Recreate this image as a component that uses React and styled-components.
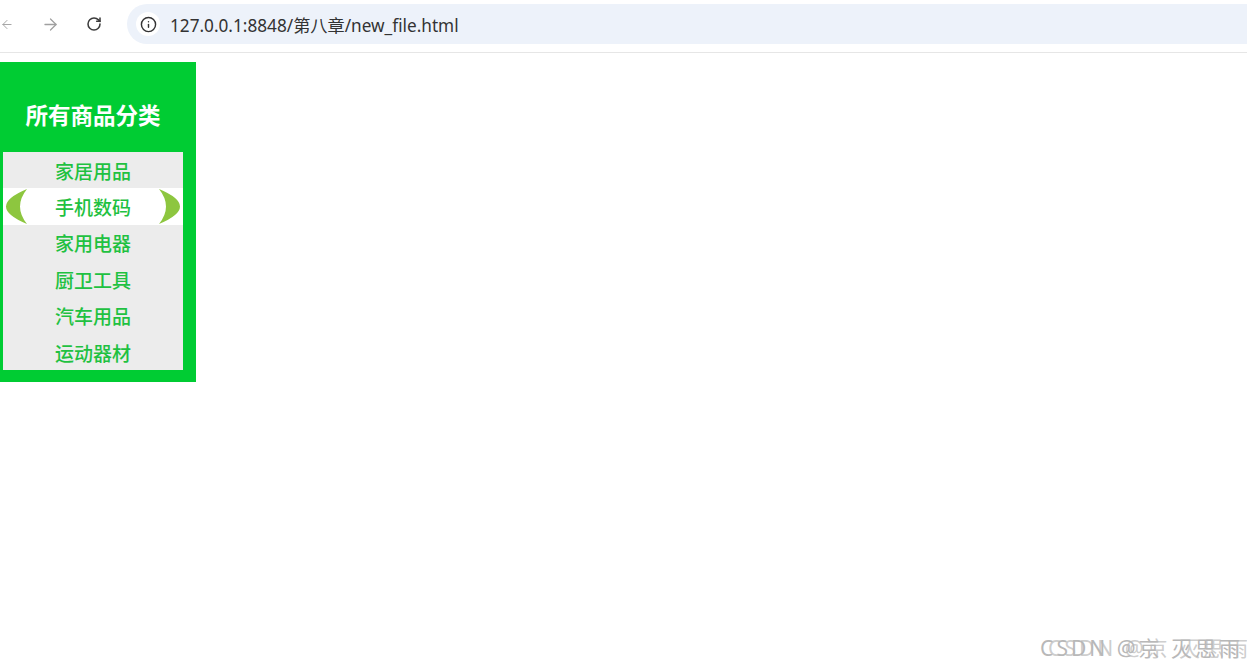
import React from 'react'
import styled, { createGlobalStyle } from 'styled-components'
import { ArrowLeft, ArrowRight, RotateCw, Info } from 'lucide-react'

const Global = createGlobalStyle`
  html, body { margin:0; padding:0; background:#fff; }
  body { font-family: "Noto Sans", "Noto Sans CJK SC", sans-serif; }
  * { box-sizing:border-box; }
`

const Page = styled.div`
  width:1247px;
  height:669px;
  display:flex;
  flex-direction:column;
  overflow:hidden;
`

const Toolbar = styled.div`
  height:53px;
  display:flex;
  align-items:flex-start;
  padding-top:4px;
  border-bottom:1px solid #e6e6e6;
`

const NavButton = styled.div`
  width:${p => p.w}px;
  height:40px;
  display:flex;
  align-items:center;
  justify-content:center;
  color:${p => p.dim ? '#a0a0a0' : '#3c3c3c'};
`

const AddressBar = styled.div`
  flex:1;
  height:40px;
  margin-left:${p => p.ml}px;
  background:#edf2fa;
  border-radius:20px 0 0 20px;
  display:flex;
  align-items:center;
  padding-left:9px;
  gap:10px;
`

const InfoDot = styled.div`
  width:24px;
  height:24px;
  border-radius:50%;
  background:#fff;
  display:flex;
  align-items:center;
  justify-content:center;
  color:#333;
`

const Url = styled.span`
  font-family:"Noto Sans","Noto Sans CJK SC",sans-serif;
  font-size:17.2px;
  color:#333;
`

const Content = styled.div`
  flex:1;
  position:relative;
  padding-top:9px;
`

const Menu = styled.div`
  width:196px;
  background:#00cc33;
  padding:0 13px 12px 3px;
`

const Title = styled.h2`
  margin:0;
  height:90px;
  display:flex;
  align-items:center;
  justify-content:center;
  padding:14px 0 0 0;
  font-family:"Noto Sans CJK SC",sans-serif;
  font-size:22.5px;
  font-weight:700;
  color:#fff;
`

const List = styled.ul`
  margin:0;
  padding:0;
  list-style:none;
  background:#ececec;
`

const Item = styled.li`
  position:relative;
  height:36.4px;
  display:flex;
  align-items:center;
  justify-content:center;
  font-family:"Noto Sans CJK SC",sans-serif;
  font-size:19px;
  font-weight:500;
  color:#1fc141;
  background:${p => p.active ? '#fff' : 'transparent'};
`

const Crescent = styled.svg`
  position:absolute;
  top:0;
  ${p => p.side}:0;
  width:26px;
  height:37px;
`

const Mark = styled.div`
  position:absolute;
  right:4px;
  bottom:7px;
  font-family:"Noto Sans","Noto Sans CJK SC",sans-serif;
  font-size:21px;
  letter-spacing:3px;
  color:#b8b8b8;
  text-shadow:8px 0 0 rgba(184,184,184,0.7);
  white-space:nowrap;
`

const items = ['家居用品', '手机数码', '家用电器', '厨卫工具', '汽车用品', '运动器材']

const Moon = ({ side }) => (
  <Crescent side={side} viewBox="0 0 26 37">
    <path
      d="M24 1 Q-18 18.5 24 36 Q10 18.5 24 1 Z"
      fill="#8dc63f"
      transform={side === 'right' ? 'translate(26 0) scale(-1 1)' : undefined}
    />
  </Crescent>
)

const App = () => {
  return (
    <Page>
      <Global />
      <Toolbar>
        <NavButton w={14} dim><ArrowLeft size={19} strokeWidth={1.6} /></NavButton>
        <NavButton w={72} dim><ArrowRight size={19} strokeWidth={1.6} /></NavButton>
        <NavButton w={16}><RotateCw size={16} strokeWidth={2.3} /></NavButton>
        <AddressBar ml={25}>
          <InfoDot><Info size={17} strokeWidth={2} /></InfoDot>
          <Url>127.0.0.1:8848/第八章/new_file.html</Url>
        </AddressBar>
      </Toolbar>
      <Content>
        <Menu>
          <Title>所有商品分类</Title>
          <List>
            {items.map((t, i) => (
              <Item key={t} active={i === 1}>
                {i === 1 && <Moon side="left" />}
                {t}
                {i === 1 && <Moon side="right" />}
              </Item>
            ))}
          </List>
        </Menu>
        <Mark>CSDN @京 灭思雨</Mark>
      </Content>
    </Page>
  )
}

export default App
